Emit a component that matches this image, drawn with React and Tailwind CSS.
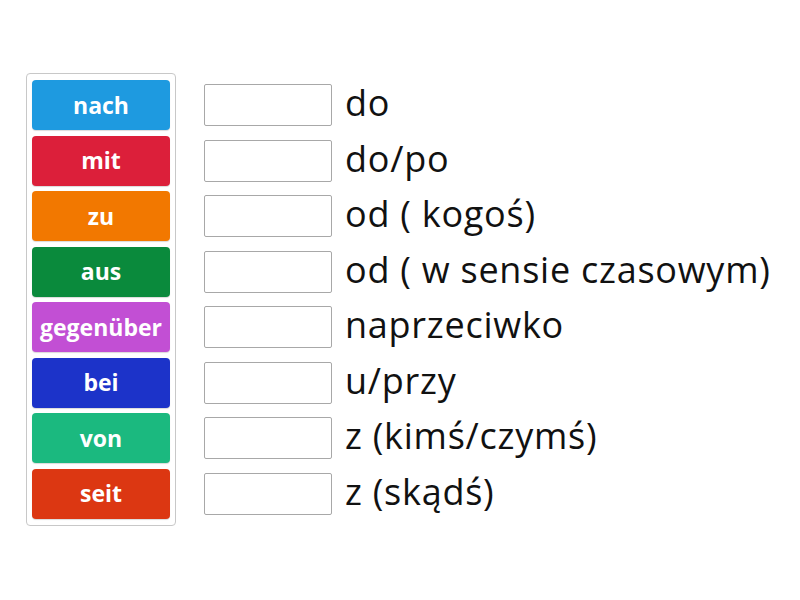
import React from 'react';

const words = [
  { label: 'nach', color: 'bg-[#1e9ae0]' },
  { label: 'mit', color: 'bg-[#dc1f3a]' },
  { label: 'zu', color: 'bg-[#f27800]' },
  { label: 'aus', color: 'bg-[#0a8a3c]' },
  { label: 'gegenüber', color: 'bg-[#c24fd4]' },
  { label: 'bei', color: 'bg-[#1c33c9]' },
  { label: 'von', color: 'bg-[#1bb97f]' },
  { label: 'seit', color: 'bg-[#dc3712]' },
];

const meanings = [
  'do',
  'do/po',
  'od ( kogoś)',
  'od ( w sensie czasowym)',
  'naprzeciwko',
  'u/przy',
  'z (kimś/czymś)',
  'z (skądś)',
];

const App = () => {
  return (
    <div className="w-[800px] h-[600px] bg-white font-['Open_Sans',sans-serif] pt-[73px] pl-[26px] flex items-start">
      <div className="w-[150px] border border-[#c8c8c8] rounded-[4px] px-[5px] py-[6px] flex flex-col gap-[5.5px]">
        {words.map((w) => (
          <div
            key={w.label}
            className={`${w.color} h-[50px] rounded-[4px] flex items-center justify-center text-white font-bold text-[23px] shadow-[0_1px_1px_rgba(0,0,0,0.15)]`}
          >
            {w.label}
          </div>
        ))}
      </div>
      <div className="ml-[28px] mt-[7px] flex flex-col gap-[5.5px]">
        {meanings.map((m) => (
          <div key={m} className="h-[50px] flex items-center">
            <div className="w-[128px] h-[42px] border border-[#a8a8a8] rounded-[2px] bg-white" />
            <span className="ml-[13px] mb-[4px] text-[36px] tracking-[0.75px] text-[#111] leading-none">{m}</span>
          </div>
        ))}
      </div>
    </div>
  );
};

export default App;
